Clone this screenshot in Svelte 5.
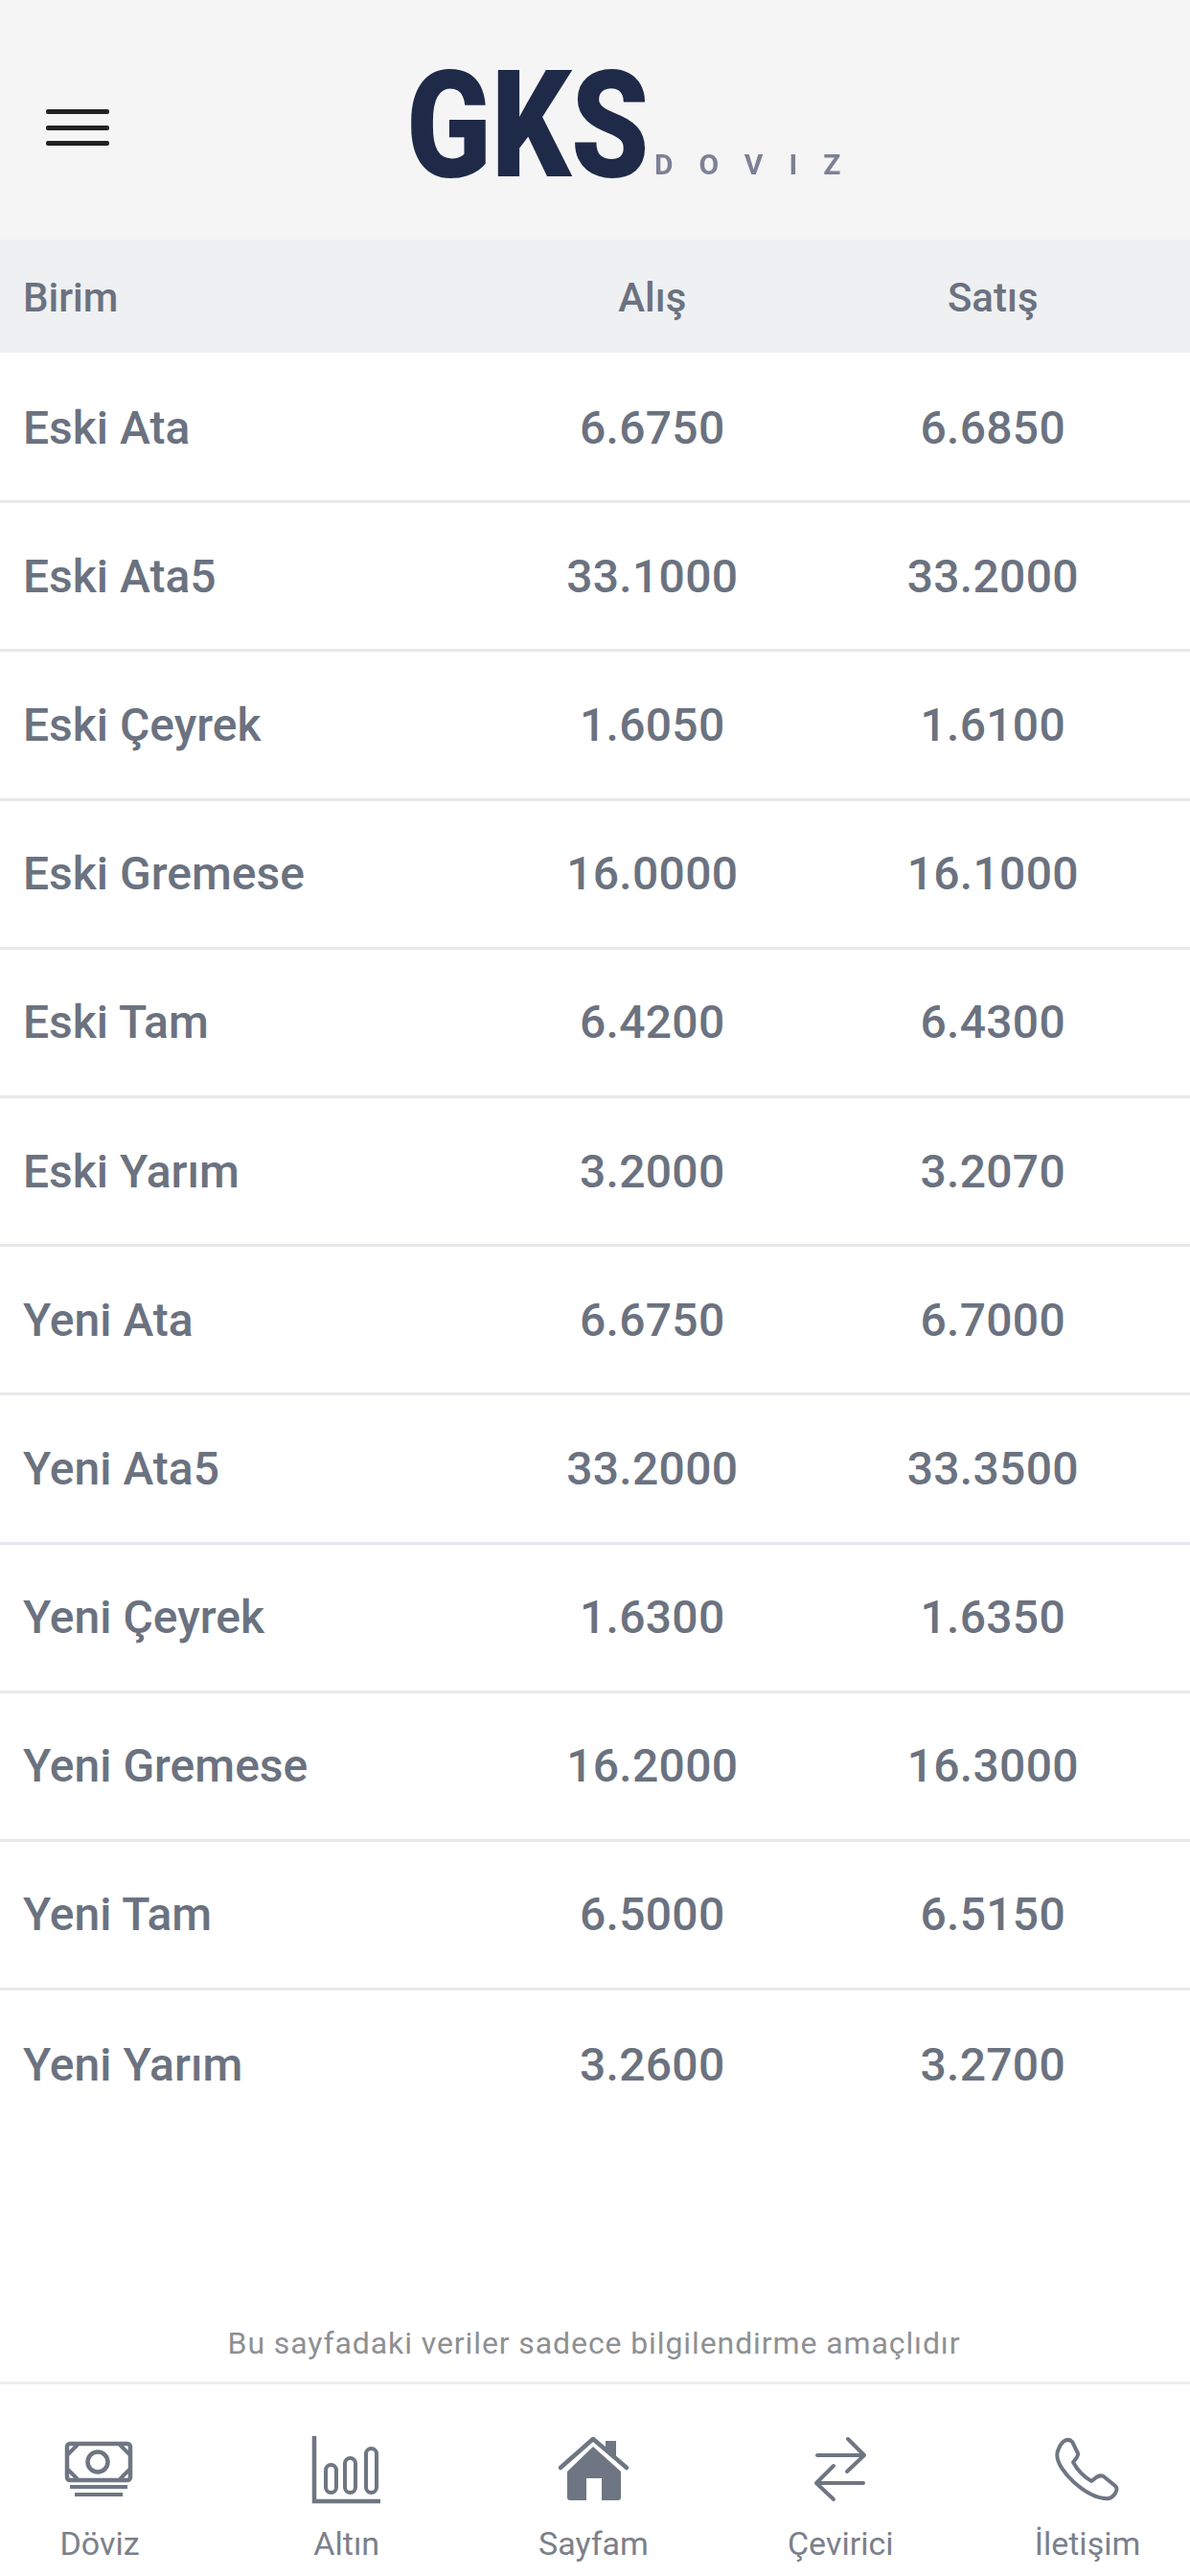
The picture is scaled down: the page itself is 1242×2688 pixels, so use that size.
<script>
  const rows = [
    ['Eski Ata', '6.6750', '6.6850'],
    ['Eski Ata5', '33.1000', '33.2000'],
    ['Eski Çeyrek', '1.6050', '1.6100'],
    ['Eski Gremese', '16.0000', '16.1000'],
    ['Eski Tam', '6.4200', '6.4300'],
    ['Eski Yarım', '3.2000', '3.2070'],
    ['Yeni Ata', '6.6750', '6.7000'],
    ['Yeni Ata5', '33.2000', '33.3500'],
    ['Yeni Çeyrek', '1.6300', '1.6350'],
    ['Yeni Gremese', '16.2000', '16.3000'],
    ['Yeni Tam', '6.5000', '6.5150'],
    ['Yeni Yarım', '3.2600', '3.2700']
  ];
</script>

<div class="page">
  <header class="top">
    <button class="menu" aria-label="Menü">
      <span></span><span></span><span></span>
    </button>
    <div class="logo">
      <span class="logo-mark">GKS</span>
      <span class="logo-sub">DOVIZ</span>
    </div>
  </header>

  <div class="row head">
    <div>Birim</div>
    <div class="num">Alış</div>
    <div class="num">Satış</div>
  </div>

  <div class="list">
    {#each rows as [name, buy, sell]}
      <div class="row item">
        <div class="name">{name}</div>
        <div class="num">{buy}</div>
        <div class="num">{sell}</div>
      </div>
    {/each}
  </div>

  <p class="note">Bu sayfadaki veriler sadece bilgilendirme amaçlıdır</p>

  <nav class="tabs">
    <div class="tab">
      <svg viewBox="0 0 100 72" fill="none" stroke="currentColor" stroke-width="4.5">
        <rect x="16" y="8" width="66" height="38" rx="3" />
        <circle cx="48" cy="27" r="10.5" />
        <path d="M17 19 27 9M71 9l10 10M17 35l10 10M71 45l10-10" stroke-width="4" />
        <path d="M19 53h60M24 61h50" stroke-width="4" />
      </svg>
      <span>Döviz</span>
    </div>
    <div class="tab">
      <svg viewBox="0 0 100 72" fill="none" stroke="currentColor" stroke-width="4">
        <path d="M16 0V68H85" stroke-width="4.5" />
        <rect x="28" y="30" width="11" height="29" rx="5.500" />
        <rect x="48" y="23" width="11" height="36" rx="5.500" />
        <rect x="70" y="13" width="11" height="46" rx="5.500" />
      </svg>
      <span>Altın</span>
    </div>
    <div class="tab">
      <svg viewBox="0 0 100 72" fill="none" stroke="currentColor" stroke-width="4.5">
        <path d="M15 33 49 3l35 30" stroke-linecap="round" stroke-linejoin="round" />
        <path fill="currentColor" stroke="none" fill-rule="evenodd" d="M49 11 78 37V64a3 3 0 0 1-3 3H25a3 3 0 0 1-3-3V37ZM42 44V67H58V44Z" />
        <path fill="currentColor" stroke="none" d="M62 5H73V23L62 13Z" />
      </svg>
      <span>Sayfam</span>
    </div>
    <div class="tab">
      <svg viewBox="0 0 100 72" fill="none" stroke="currentColor" stroke-width="4" stroke-linecap="round" stroke-linejoin="round">
        <path d="M26 20H74M58 3 75 20 57 37" />
        <path d="M74 49H26M43 31 25 49 43 66" />
      </svg>
      <span>Çevirici</span>
    </div>
    <div class="tab">
      <svg viewBox="0 0 100 72" fill="none" stroke="currentColor" stroke-width="4" stroke-linejoin="round">
        <path d="M20 13C23.300 4.700 30 1.300 34.300 6.300L40 18C41 21.300 36.700 24.700 35 27.300C40 36.300 46.700 43 54.300 47C58.300 44 61.700 39.700 66.700 42L79 52C83.300 56.300 76.700 65.300 70 65.300C48.300 64 18.300 36.300 18.300 19.700C18.300 17 19 15 20 13Z" />
      </svg>
      <span>İletişim</span>
    </div>
  </nav>
</div>

<style>
  :global(body) {
    margin: 0;
    background: #ffffff;
  }

  .page {
    display: flex;
    flex-direction: column;
    height: 2688px;
    font-family: Roboto, 'Liberation Sans', sans-serif;
    color: #6b7280;
    overflow: hidden;
  }

  .top {
    display: flex;
    align-items: center;
    height: 250px;
    padding-left: 48px;
    box-sizing: border-box;
    background: #f5f5f5;
  }

  .menu {
    display: flex;
    flex-direction: column;
    gap: 11.500px;
    width: 66px;
    margin-top: 16px;
    padding: 0;
    border: none;
    background: none;
  }

  .menu span {
    height: 5px;
    border-radius: 2px;
    background: #222222;
  }

  .logo {
    display: flex;
    align-items: baseline;
    margin-left: 310px;
    margin-top: 12px;
    white-space: nowrap;
    filter: blur(0.7px);
  }

  .logo-mark {
    width: 259px;
    font-size: 155px;
    line-height: 1;
    font-weight: 900;
    color: #1f2a48;
    transform: scaleX(0.84);
    transform-origin: left;
  }

  .logo-sub {
    font-size: 30px;
    font-weight: 700;
    letter-spacing: 27px;
    color: #7d8196;
    transform: translateY(-2px);
  }

  .row {
    display: grid;
    grid-template-columns: 479px 1fr 1fr;
    align-items: center;
    padding: 0 28px 0 24px;
    box-sizing: border-box;
  }

  .num {
    text-align: center;
  }

  .head {
    height: 118px;
    flex: none;
    padding-top: 2px;
    background: #eff0f2;
    font-size: 42px;
    font-weight: 500;
  }

  .list {
    margin-top: 2px;
  }

  .item {
    height: 155.200px;
    font-size: 48px;
    font-weight: 500;
    letter-spacing: 0.300px;
    border-bottom: 3px solid #e8e8ec;
  }

  .item:last-child {
    border-bottom: none;
  }

  .name {
    font-size: 48px;
    letter-spacing: 0;
  }

  .note {
    margin: auto 0 21px;
    padding-right: 2px;
    text-align: center;
    font-size: 32px;
    letter-spacing: 0.900px;
    color: #8e9094;
  }

  .tabs {
    display: flex;
    justify-content: space-between;
    height: 203px;
    padding: 54px 17px 0 14px;
    box-sizing: border-box;
    border-top: 3px solid #ececee;
  }

  .tab {
    display: flex;
    flex-direction: column;
    align-items: center;
    width: 180px;
    color: #6f7683;
  }

  .tab svg {
    width: 100px;
    height: 72px;
    flex: none;
  }

  .tab span {
    margin-top: 20px;
    font-size: 34px;
    line-height: 40px;
    color: #7b808b;
  }
</style>
